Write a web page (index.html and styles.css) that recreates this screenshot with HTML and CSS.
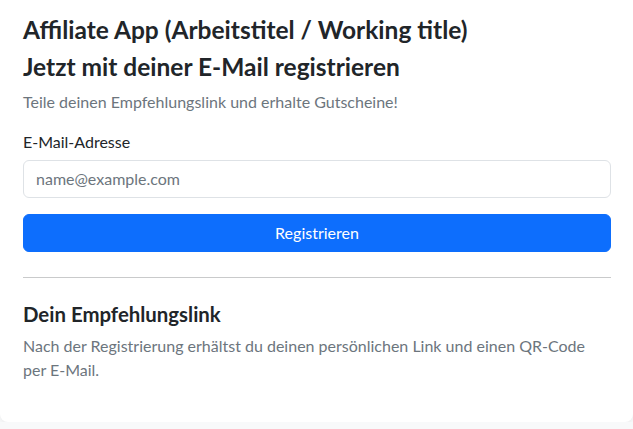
FILE: index.html
```html
<!DOCTYPE html>
<html lang="de">
<head>
<meta charset="utf-8">
<title>Affiliate App</title>
<link rel="stylesheet" href="styles.css">
</head>
<body>
<main class="card">
  <h1 class="title">Affiliate App (Arbeitstitel / Working title)</h1>
  <h2 class="title">Jetzt mit deiner E-Mail registrieren</h2>
  <p class="muted intro">Teile deinen Empfehlungslink und erhalte Gutscheine!</p>
  <form class="form">
    <label class="label" for="email">E-Mail-Adresse</label>
    <input class="input" id="email" type="email" placeholder="name@example.com">
    <button class="btn" type="button">Registrieren</button>
  </form>
  <hr class="divider">
  <h3 class="subtitle">Dein Empfehlungslink</h3>
  <p class="muted info">Nach der Registrierung erhältst du deinen persönlichen Link und einen QR-Code per E-Mail.</p>
</main>
</body>
</html>
```
FILE: styles.css
```css
html, body {
  margin: 0;
  padding: 0;
  background: #f8f9fa;
}
body {
  font-family: Lato, "Open Sans", sans-serif;
  font-size: 16px;
  line-height: 1.5;
  color: #212529;
}
.card {
  box-sizing: border-box;
  width: 633px;
  background: #fff;
  border-radius: 0 0 8px 8px;
  box-shadow: 0 2px 4px rgba(0,0,0,0.05);
  padding: 16px 22px 24px 23px;
}
.title {
  margin: 0 0 8px;
  font-size: 24.5px;
  line-height: 28.8px;
  font-weight: 700;
}
.subtitle {
  margin: 24px 0 8px;
  font-size: 20.4px;
  line-height: 24px;
  font-weight: 700;
}
.muted {
  color: #6c757d;
  margin: 0 0 16px;
}
.intro {
  margin-bottom: 16px;
}
.form {
  display: flex;
  flex-direction: column;
}
.label {
  margin-bottom: 6px;
}
.input {
  box-sizing: border-box;
  height: 38px;
  padding: 6px 12px;
  font: inherit;
  color: #212529;
  border: 1px solid #dee2e6;
  border-radius: 6px;
  background: #fff;
  margin-bottom: 16px;
}
.input::placeholder {
  color: #6c757d;
}
.btn {
  box-sizing: border-box;
  height: 38px;
  font: inherit;
  color: #fff;
  background: #0d6efd;
  border: 1px solid #0d6efd;
  border-radius: 6px;
}
.divider {
  margin: 25px 0 0;
  border: 0;
  border-top: 1px solid #c9cacb;
  height: 0;
}
.info {
  margin-bottom: 16px;
}
```
